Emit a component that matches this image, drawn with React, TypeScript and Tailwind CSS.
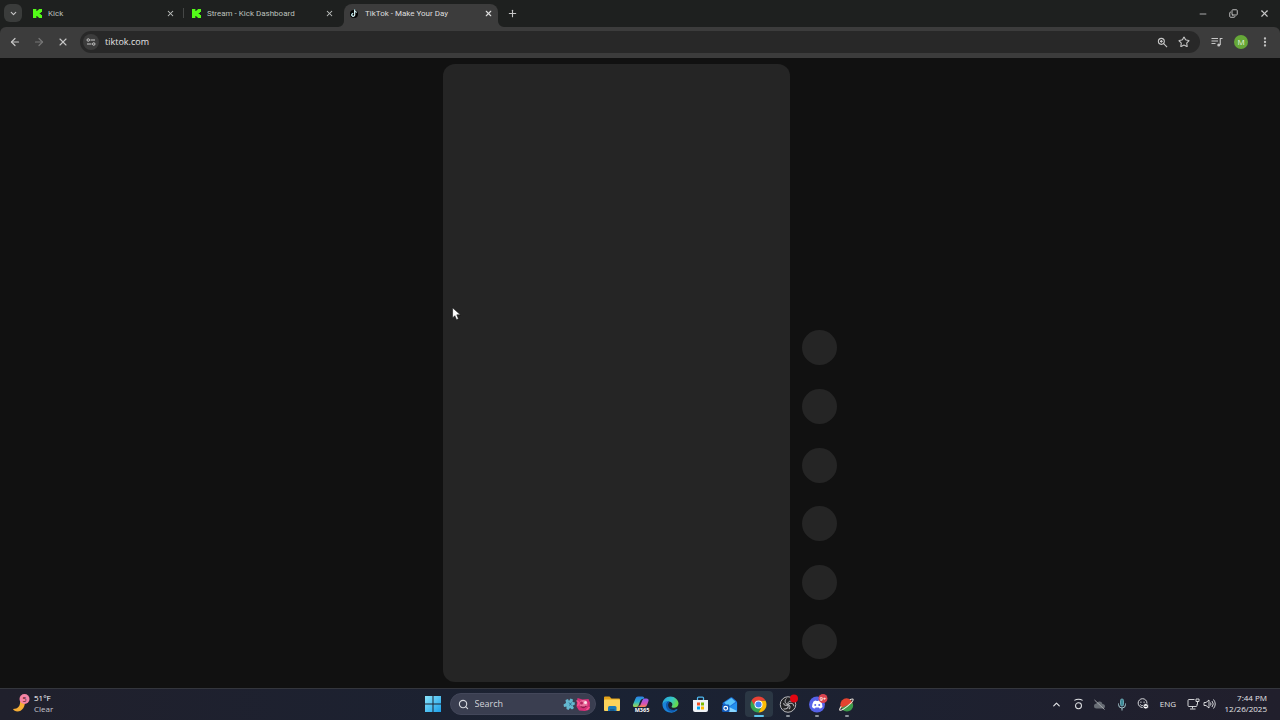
import type { ReactNode } from "react";
import { ArrowLeft, ArrowRight, ChevronDown, ChevronUp, Copy, EllipsisVertical, Minus, Plus, Search, Star, X } from "lucide-react";

function KickIcon() {
  return (
    <svg viewBox="0 0 8 9" preserveAspectRatio="none" className="size-[9px] shrink-0" aria-hidden="true">
      <path fill="#53fc18" d="M0 0h3v2h1V1h1V0h3v3H7v1H6v1h1v1h1v3H5V8H4V7H3v2H0z" />
    </svg>
  );
}

function TikTokIcon() {
  return (
    <svg viewBox="0 0 18 18" className="size-[9px] shrink-0" aria-hidden="true">
      <circle cx="8" cy="10" r="8" fill="#050505" />
      <path d="M9 1v10.5a3 3 0 1 1-3-3M9 3c.6 2 2 3 4 3" fill="none" stroke="#69c9d0" strokeWidth="2" />
      <path d="M9.6 1.5v10.5a3 3 0 1 1-3-3M9.6 3.5c.6 2 2 3 4 3" fill="none" stroke="#fff" strokeWidth="1.8" />
    </svg>
  );
}

type TabProps = { title: string; icon: ReactNode; active?: boolean; divider?: boolean };

function Tab({ title, icon, active, divider }: TabProps) {
  if (active) {
    return (
      <div className="relative ml-px flex w-[154px] items-center gap-1.5 rounded-t-lg bg-[#3c3c3c] pr-1 pb-1 pl-1.5 text-[#dedede]">
        <svg viewBox="0 0 6 6" className="absolute bottom-0 -left-1.5 size-1.5" aria-hidden="true">
          <path d="M6 0v6H0a6 6 0 0 0 6-6z" fill="#3c3c3c" />
        </svg>
        {icon}
        <span className="grow whitespace-nowrap">{title}</span>
        <button aria-label={`Close ${title}`} className="grid size-3 place-items-center">
          <X size={9} strokeWidth={3} />
        </button>
        <svg viewBox="0 0 6 6" className="absolute -right-1.5 bottom-0 size-1.5" aria-hidden="true">
          <path d="M0 0v6h6a6 6 0 0 1-6-6z" fill="#3c3c3c" />
        </svg>
      </div>
    );
  }
  return (
    <div className="relative flex w-[159px] items-center gap-1.5 px-2 pb-1 text-[#bdc0be]">
      {icon}
      <span className="grow whitespace-nowrap">{title}</span>
      <button aria-label={`Close ${title}`} className="grid size-3 place-items-center">
        <X size={9} strokeWidth={2.8} />
      </button>
      {divider && <span className="absolute top-1 right-0 h-2.5 w-px bg-[#454746]" />}
    </div>
  );
}

function TabStrip() {
  return (
    <div className="flex h-[27px] shrink-0 bg-[#1e201f] pt-1 text-[8px] text-[#c7c7c7]">
      <button aria-label="Search tabs" className="mr-[3px] ml-1 grid size-[18px] place-items-center rounded-md bg-[#3a3c3b]">
        <ChevronDown size={9} strokeWidth={3} />
      </button>
      <div className="flex font-[Roboto,sans-serif]">
        <Tab title="Kick" icon={<KickIcon />} divider />
        <Tab title="Stream - Kick Dashboard" icon={<KickIcon />} />
        <Tab title="TikTok - Make Your Day" icon={<TikTokIcon />} active />
      </div>
      <button aria-label="New tab" className="ml-1 grid w-5 place-items-center pb-1">
        <Plus size={11} strokeWidth={2.4} />
      </button>
      <div className="ml-auto flex pb-1">
        <button aria-label="Minimize" className="grid w-[30px] place-items-center">
          <Minus size={10} strokeWidth={2} />
        </button>
        <button aria-label="Restore" className="grid w-[31px] place-items-center">
          <Copy size={9} strokeWidth={2.5} className="-scale-y-100" />
        </button>
        <button aria-label="Close window" className="grid w-[31px] place-items-center">
          <X size={11} strokeWidth={2.4} />
        </button>
      </div>
    </div>
  );
}

function Toolbar() {
  return (
    <div className="flex h-[31px] shrink-0 items-center rounded-t-md bg-[#3c3c3c] px-[3px] pb-px text-[#c7c7c7]">
      <button aria-label="Back" className="grid size-6 place-items-center">
        <ArrowLeft size={12} strokeWidth={2.4} />
      </button>
      <button aria-label="Forward" className="grid size-6 place-items-center text-[#777]">
        <ArrowRight size={12} strokeWidth={2.4} />
      </button>
      <button aria-label="Stop loading" className="grid size-6 place-items-center">
        <X size={12} strokeWidth={2.2} />
      </button>
      <div className="mx-[5px] flex h-[22px] grow items-center rounded-full bg-[#282828] px-[3px]">
        <button aria-label="View site information" className="grid size-4 place-items-center rounded-full bg-[#3c3c3c]">
          <svg viewBox="0 0 20 16" className="h-2 w-2.5" fill="none" stroke="currentColor" strokeWidth="2" aria-hidden="true">
            <circle cx="4.5" cy="4" r="2.5" />
            <path d="M9 4h9M2 12h9" />
            <circle cx="15.5" cy="12" r="2.5" />
          </svg>
        </button>
        <input
          aria-label="Address and search bar"
          defaultValue="tiktok.com"
          className="ml-1.5 min-w-0 grow bg-transparent text-[9px] text-[#e3e3e3] outline-none"
        />
        <button aria-label="Zoom" className="grid size-[22px] place-items-center">
          <svg viewBox="0 0 24 24" className="size-[11px]" fill="none" stroke="currentColor" strokeWidth="2.4" aria-hidden="true">
            <circle cx="9.5" cy="9.5" r="6.5" />
            <path d="M14.5 14.5 22 22M6.5 9.5h6M9.5 6.5v6" />
          </svg>
        </button>
        <button aria-label="Bookmark this tab" className="mr-0.5 grid size-[22px] place-items-center">
          <Star size={12} strokeWidth={2.2} strokeLinejoin="miter" />
        </button>
      </div>
      <button aria-label="Media controls" className="grid size-6 place-items-center">
        <svg viewBox="0 0 24 20" className="h-2.5 w-3" fill="none" stroke="currentColor" strokeWidth="2.2" aria-hidden="true">
          <path d="M1 3h13M1 8h13M1 13h8M18.5 16V3H23" />
          <circle cx="15.5" cy="16" r="3" fill="currentColor" stroke="none" />
        </svg>
      </button>
      <button aria-label="Profile" className="grid size-6 place-items-center">
        <span className="grid size-[14px] place-items-center rounded-full bg-[#66a838] text-[8px] leading-none text-[#e8f2df]">M</span>
      </button>
      <button aria-label="Chrome menu" className="grid size-6 place-items-center">
        <EllipsisVertical size={12} strokeWidth={2.6} />
      </button>
    </div>
  );
}

function Feed() {
  return (
    <main className="relative flex min-h-0 grow justify-center gap-3 bg-[#111] py-1.5">
      <div className="w-[347px] rounded-xl bg-[#252525]" />
      <div className="mb-[23px] flex h-[329px] flex-col justify-between self-end">
        {[0, 1, 2, 3, 4, 5].map((i) => (
          <div key={i} className="size-[35px] rounded-full bg-[#252525]" />
        ))}
      </div>
      <svg viewBox="0 0 16 24" className="absolute top-[249px] left-[452px] h-3.5 w-[9px]" aria-hidden="true">
        <path d="M1 1v18l4-4 3 7 3.5-1.500-3-7H15z" fill="#fff" stroke="#111" strokeWidth="1" />
      </svg>
    </main>
  );
}

function FolderIcon() {
  return (
    <svg viewBox="0 0 36 34" className="size-[18px]" aria-hidden="true">
      <path d="M2 4q0-2 2-2h9l4 4h15q2 0 2 2v6H2z" fill="#e3a21a" />
      <rect x="2" y="8" width="32" height="23" rx="2" fill="#fbd35b" />
      <path d="M10 31v-7q0-3 3-3h11q3 0 3 3v7z" fill="#1979b9" />
      <path d="M14 31v-4h9v4z" fill="#135d94" />
    </svg>
  );
}

function CopilotIcon() {
  return (
    <svg viewBox="0 0 36 36" className="size-[18px]" aria-hidden="true">
      <defs>
        <linearGradient id="copilotA" x1="0" y1="0" x2="0" y2="1">
          <stop offset="0" stopColor="#2d7fe8" />
          <stop offset=".5" stopColor="#2bb5c9" />
          <stop offset="1" stopColor="#a4d94a" />
        </linearGradient>
        <linearGradient id="copilotB" x1="0" y1="0" x2="0" y2="1">
          <stop offset="0" stopColor="#8f5cf0" />
          <stop offset=".6" stopColor="#d452b7" />
          <stop offset="1" stopColor="#f7864f" />
        </linearGradient>
      </defs>
      <path d="M12 3h9q3 0 4 4l-5 1q-3 1-4 5l-3 8q-1 3-5 3H5q-4 0-3-5L7 7q1-4 5-4z" fill="url(#copilotA)" />
      <path d="M25 24h-9q-3 0-4-2h2q3-1 4-5l3-7q1-3 5-3h3q5 0 4 5l-3 8q-1 4-5 4z" fill="url(#copilotB)" />
      <text x="20" y="34" textAnchor="middle" fontSize="11" fontWeight="700" fill="#fff">M365</text>
    </svg>
  );
}

function EdgeIcon() {
  return (
    <svg viewBox="0 0 36 36" className="size-[17px]" aria-hidden="true">
      <defs>
        <linearGradient id="edgeTop" x1="0" y1="0" x2="1" y2="0.4">
          <stop offset="0" stopColor="#249fe0" />
          <stop offset=".6" stopColor="#35c5c7" />
          <stop offset="1" stopColor="#64d94d" />
        </linearGradient>
      </defs>
      <path d="M1 18C1 8 9 1 18 1s17 7 17 15c0 6-5 9-9 9-5 0-7-2-5-4 3-5-1-9-6-9-7 0-13 4-14 6z" fill="url(#edgeTop)" />
      <path d="M1 18c2-5 7-8 13-7-5 3-6 10-2 15 5 5 13 5 19 2 1-1 2 0 1 2a17 17 0 0 1-15 5C8 34 1 27 1 18z" fill="#1a82d8" />
      <path d="M14 11c-7 3-8 15 1 21 6 3 12 1 16-4-6 3-14 2-17-4-2-5-1-9 2-12z" fill="#0f58ab" />
    </svg>
  );
}

function StoreIcon() {
  return (
    <svg viewBox="0 0 34 34" className="size-[17px]" aria-hidden="true">
      <path d="M11 9V4q0-2 2-2h8q2 0 2 2v5" fill="none" stroke="#4fb6ec" strokeWidth="2.5" />
      <path d="M2 8h30v20q0 4-4 4H6q-4 0-4-4z" fill="#f0f3f7" />
      <path d="M10 13h6v6h-6z" fill="#f25022" />
      <path d="M18 13h6v6h-6z" fill="#7fba00" />
      <path d="M10 21h6v6h-6z" fill="#00a4ef" />
      <path d="M18 21h6v6h-6z" fill="#ffb900" />
    </svg>
  );
}

function OutlookIcon() {
  return (
    <svg viewBox="0 0 36 36" className="size-[17px]" aria-hidden="true">
      <path d="M3 15 20 3q2-1 4 0l8 7q2 2 2 4v16q0 4-4 4H12q-4 0-4-4z" fill="#1b6fd6" />
      <path d="M7 14 22 4l9 8-16 12z" fill="#58c3fa" />
      <path d="m12 27 22-14v17q0 4-4 4H15z" fill="#2490ed" />
      <path d="m16 23 18 9q-1 2-4 2H13z" fill="#8ad6ff" />
      <rect x="2" y="18" width="16" height="16" rx="3" fill="#1058b7" />
      <circle cx="10" cy="26" r="4" fill="none" stroke="#fff" strokeWidth="2.5" />
    </svg>
  );
}

function ChromeIcon() {
  return (
    <svg viewBox="0 0 36 36" className="size-[17px]" aria-hidden="true">
      <path d="M3.3 9.5A17 17 0 0 0 18 35l7.4-12.800L18 18z" fill="#34a653" />
      <path d="M18 35A17 17 0 0 0 32.7 9.5H18V18l7.4 4.2z" fill="#fbbc05" />
      <path d="M3.3 9.5a17 17 0 0 1 29.4 0H18a8.5 8.5 0 0 0-7.4 12.7z" fill="#e94235" />
      <circle cx="18" cy="18" r="8.5" fill="#fff" />
      <circle cx="18" cy="18" r="6.5" fill="#4285f4" />
    </svg>
  );
}

function ObsIcon() {
  return (
    <svg viewBox="0 0 36 36" className="size-[18px] overflow-visible" aria-hidden="true">
      <circle cx="18" cy="19" r="15.5" fill="#222225" stroke="#b9b9bd" strokeWidth="2" />
      <g fill="none" stroke="#b9b9bd" strokeWidth="2">
        <path d="M18 19c-6-1-8-8-3-12M18 19c-1-5 3-8 7-6" />
        <path d="M18 19c-6-1-8-8-3-12M18 19c-1-5 3-8 7-6" transform="rotate(120 18 19)" />
        <path d="M18 19c-6-1-8-8-3-12M18 19c-1-5 3-8 7-6" transform="rotate(240 18 19)" />
      </g>
      <circle cx="30" cy="7" r="8" fill="#e30612" />
    </svg>
  );
}

function DiscordIcon() {
  return (
    <svg viewBox="0 0 36 36" className="size-[18px] overflow-visible" aria-hidden="true">
      <circle cx="18" cy="19" r="16" fill="#5662e8" />
      <path d="M11 13q3-2 5-2l1 1h3l1-1q2 0 5 2 3 5 3 11-3 3-6 3l-1-2h-7l-1 2q-3 0-6-3 0-6 3-11z" fill="#fff" />
      <circle cx="14.5" cy="20" r="2" fill="#5662e8" />
      <circle cx="22.5" cy="20" r="2" fill="#5662e8" />
      <circle cx="30" cy="7" r="9" fill="#d9444f" />
      <text x="30" y="11" textAnchor="middle" fontSize="11" fontWeight="600" fill="#fff">9+</text>
    </svg>
  );
}

function PlanetIcon() {
  return (
    <svg viewBox="0 0 36 36" className="size-[17px]" aria-hidden="true">
      <circle cx="18" cy="18" r="13" fill="#e5432f" />
      <path d="M7 25a13 13 0 0 0 24-10z" fill="#3d9b4b" />
      <path d="M7 22q-5 7-3 8c4 3 30-18 28-23-1-2-5 0-7 1" fill="none" stroke="#f3e9df" strokeWidth="2.2" />
    </svg>
  );
}

const apps = [
  { name: "File Explorer", icon: <FolderIcon /> },
  { name: "Microsoft 365 Copilot", icon: <CopilotIcon /> },
  { name: "Microsoft Edge", icon: <EdgeIcon /> },
  { name: "Microsoft Store", icon: <StoreIcon /> },
  { name: "Outlook", icon: <OutlookIcon /> },
  { name: "Google Chrome", icon: <ChromeIcon />, focused: true },
  { name: "OBS Studio", icon: <ObsIcon />, running: true },
  { name: "Discord", icon: <DiscordIcon />, running: true },
  { name: "Planet", icon: <PlanetIcon />, running: true },
];

function SearchArt() {
  return (
    <svg viewBox="0 0 56 34" className="h-[17px] w-7" aria-hidden="true">
      <path d="M5 8l5-2 2 4 3-5 5 2-1 5 5 1-1 5-4 1 3 5-4 3-4-3-3 4-4-2v-5l-5 1-1-5 5-3z" fill="#64b8cf" />
      <path d="m12 13 5 6m0-6-4 6" stroke="#2d6f91" strokeWidth="2" />
      <path d="m29 4 10 3 12-1 3 7-1 14-9 3-12-1-5-8z" fill="#d82f78" />
      <circle cx="41" cy="16" r="8" fill="#ea6f9d" />
      <circle cx="37" cy="14" r="3" fill="#b6235f" />
      <circle cx="45" cy="13" r="3" fill="#fbe0e8" />
      <path d="M35 21q6 4 12-1" fill="none" stroke="#92184d" strokeWidth="3" />
      <path d="m27 9 5 4-3 7m24 2-6 6" stroke="#f6568f" strokeWidth="3" fill="none" />
    </svg>
  );
}

function Tray() {
  return (
    <div className="flex items-center justify-end pr-[13px] text-[8px] text-[#e4e5e8]">
      <div className="grid h-full w-[108px] grid-cols-5 place-items-center">
        <button aria-label="Show hidden icons"><ChevronUp size={11} strokeWidth={2.6} /></button>
        <button aria-label="Camera status">
          <svg viewBox="0 0 24 26" className="h-3 w-[11px]" fill="none" stroke="currentColor" strokeWidth="2.2">
            <path d="M3 5q9-5 18 0" />
            <circle cx="12" cy="17" r="6.5" />
          </svg>
        </button>
        <button aria-label="OneDrive">
          <svg viewBox="0 0 26 22" className="h-[11px] w-[13px]">
            <path d="M7 19q-5 0-5-5t5-5q2-5 7-4 4 0 5 5 5 0 5 5 0 4-4 4z" fill="#686d75" />
            <path d="m3 2 20 19" stroke="#a2a5aa" strokeWidth="2" />
          </svg>
        </button>
        <button aria-label="Microphone in use">
          <svg viewBox="0 0 20 26" className="h-[13px] w-2.5" fill="none" stroke="#a4c5cd" strokeWidth="2">
            <rect x="7" y="2" width="6" height="14" rx="3" fill="#3d8996" stroke="#69a6b2" />
            <path d="M3 11v2a7 7 0 0 0 14 0v-2M10 20v5" />
          </svg>
        </button>
        <button aria-label="Emoji status">
          <svg viewBox="0 0 26 26" className="size-3" fill="none" stroke="currentColor" strokeWidth="2">
            <circle cx="12" cy="11" r="9.5" />
            <path d="M7 9h3M14 9h3M7 14q3 4 7 2" />
            <circle cx="19" cy="18" r="6" fill="#fff" stroke="#242331" />
            <path d="M16 18h6" stroke="#242331" />
          </svg>
        </button>
      </div>
      <button className="w-7 text-center">ENG</button>
      <button aria-label="Network and sound" className="ml-[3px] grid w-8 grid-cols-2 place-items-center">
        <svg viewBox="0 0 26 24" className="h-3 w-[13px]" fill="none" stroke="currentColor" strokeWidth="1.8">
          <path d="M15 3H4q-2 0-2 2v10q0 2 2 2h14q2 0 2-2v-3M11 17v4M6 22h11" />
          <path d="M18 2h6v5h-6zM21 7v6" />
        </svg>
        <svg viewBox="0 0 26 24" className="h-3 w-[13px]" fill="none" stroke="currentColor" strokeWidth="1.8">
          <path d="M2 9h4l6-5v16l-6-5H2zM15 9q2 3 0 6M18 6q5 6 0 12M21 3q7 9 0 18" />
        </svg>
      </button>
      <button className="flex w-[50px] flex-col items-end pb-0.5 leading-[11px] whitespace-nowrap">
        <span>7:44 PM</span>
        <span>12/26/2025</span>
      </button>
    </div>
  );
}

function Taskbar() {
  return (
    <footer className="grid h-8 shrink-0 grid-cols-[1fr_auto_1fr] border-t border-[#34363d] bg-linear-to-r from-[#20202c] via-[#1a2233] to-[#211f2c] pb-px">
      <button className="flex items-center gap-1 pl-3 text-left text-[8px] leading-[11px]">
        <svg viewBox="0 0 36 40" className="h-5 w-[18px]" aria-hidden="true">
          <path d="M25 13c3 12-5 22-14 22-4 0-8-2-9-5 10 0 15-7 14-15z" fill="#f5ad35" />
          <circle cx="25" cy="10" r="10" fill="#f583a4" />
          <text x="25" y="15" textAnchor="middle" fontSize="14" fill="#3c1420">5</text>
        </svg>
        <span className="flex flex-col pb-0.5">
          <span className="text-white">51°F</span>
          <span className="text-[#c6c7cd]">Clear</span>
        </span>
      </button>
      <div className="flex items-center gap-0.5">
        <button aria-label="Start" className="grid w-[29px] place-items-center">
          <svg viewBox="0 0 32 32" className="size-4" aria-hidden="true">
            <defs>
              <linearGradient id="start" x1="0" y1="0" x2="1" y2="1">
                <stop offset="0" stopColor="#8ae4fb" />
                <stop offset="1" stopColor="#1b9fe9" />
              </linearGradient>
            </defs>
            <path d="M0 0h15v15H0zM17 0h15v15H17zM0 17h15v15H0zM17 17h15v15H17z" fill="url(#start)" />
          </svg>
        </button>
        <label className="flex h-[22px] w-[146px] items-center rounded-full border border-[#43475a] bg-[#3a3e50] pr-1 pl-[7px] text-[#d6d8de]">
          <Search size={11} strokeWidth={2.4} />
          <input
            aria-label="Search"
            placeholder="Search"
            className="ml-1.5 w-0 grow bg-transparent text-[9px] outline-none placeholder:text-[#d0d2da]"
          />
          <SearchArt />
        </label>
        <div className="grid h-full w-[264px] grid-cols-9">
          {apps.map((app) => (
            <button
              key={app.name}
              aria-label={app.name}
              className={app.focused ? "relative mx-px my-0.5 grid place-items-center rounded-sm bg-[#2b3744]" : "relative my-0.5 grid place-items-center"}
            >
              {app.icon}
              {app.focused && <span className="absolute bottom-0 h-0.5 w-2.5 rounded-full bg-[#5fc5ee]" />}
              {app.running && <span className="absolute bottom-0 h-0.5 w-1 rounded-full bg-[#8d939c]" />}
            </button>
          ))}
        </div>
      </div>
      <Tray />
    </footer>
  );
}

export default function App() {
  return (
    <div className="flex h-screen flex-col overflow-hidden bg-[#1e201f] font-['Open_Sans','Noto_Sans',sans-serif]">
      <TabStrip />
      <Toolbar />
      <Feed />
      <Taskbar />
    </div>
  );
}
